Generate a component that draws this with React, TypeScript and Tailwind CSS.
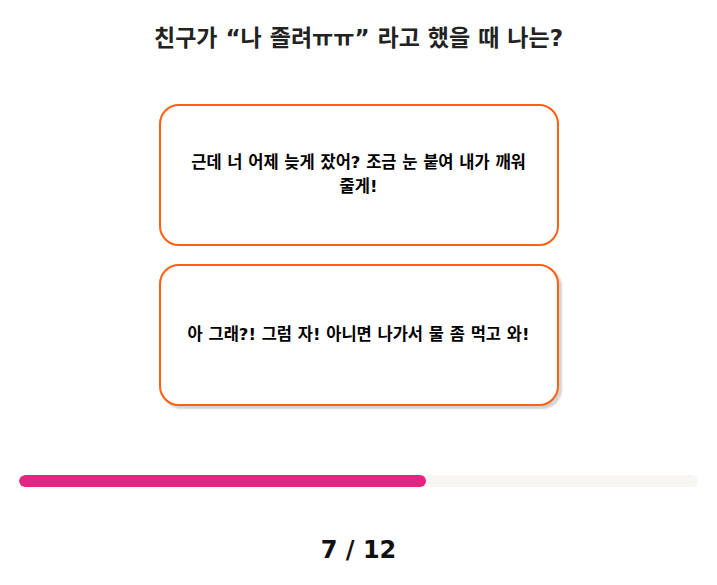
const answers = [
  '근데 너 어제 늦게 잤어? 조금 눈 붙여 내가 깨워 줄게!',
  '아 그래?! 그럼 자! 아니면 나가서 물 좀 먹고 와!',
];

export default function App() {
  const current = 7;
  const total = 12;

  return (
    <div className="min-h-screen bg-white font-['DejaVu_Sans','Noto_Sans_CJK_KR',sans-serif]">
      <div className="flex flex-col items-center pt-6">
        {/* Question */}
        <h1 className="text-[23px] leading-[28px] font-bold text-[#222]">
          친구가 “나 졸려ㅠㅠ” 라고 했을 때 나는?
        </h1>

        {/* Answers */}
        <div className="mt-[52px] flex flex-col gap-[18px]">
          {answers.map((text, i) => (
            <button
              key={text}
              className={
                'w-[400px] h-[142px] flex items-center justify-center px-5 rounded-[20px] border-2 border-[#ff5f0f] bg-white text-[16.5px] leading-[24px] font-bold text-black text-center break-keep ' +
                (i === 1 ? 'shadow-[3px_3px_2px_#d4d4d4]' : '')
              }
            >
              {text}
            </button>
          ))}
        </div>
      </div>

      {/* Progress */}
      <div className="mt-[69px] px-[19px]">
        <div className="h-[12px] w-full rounded-full bg-[#f9f6f2] overflow-hidden">
          <div
            className="h-full rounded-full bg-[#e62482]"
            style={{ width: `${(408 / 680) * 100}%` }}
          />
        </div>
      </div>

      <div className="mt-[47px] text-center text-[24px] leading-[32px] font-bold text-[#111]">
        {current} / {total}
      </div>
    </div>
  );
}
